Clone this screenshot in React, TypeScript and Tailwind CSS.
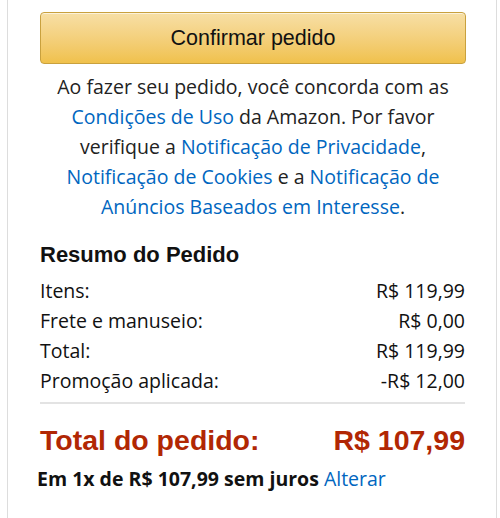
import React from "react";

const body = { fontFamily: '"Open Sans", "Noto Sans", Arial, sans-serif' };
const arial = { fontFamily: '"Liberation Sans", Arial, sans-serif' };

function Row({ label, value }: { label: string; value: string }) {
  return (
    <div className="flex justify-between h-[30px] items-center text-[19.5px] text-[#111]" style={body}>
      <span>{label}</span>
      <span>{value}</span>
    </div>
  );
}

export default function App() {
  return (
    <div className="w-[500px] h-[518px] bg-white">
      <div className="ml-[7px] w-[490px] h-[518px] border-x border-[#ddd] pl-[32px] pr-[30px] pt-[12px]">
        <button
          className="w-full h-[52px] rounded-[4px] border border-[#c9a13e] bg-gradient-to-b from-[#f7dfa5] to-[#f0c14b] text-[21.5px] text-[#111] shadow-[inset_0_1px_0_rgba(255,255,255,0.6)]"
          style={arial}
        >
          Confirmar pedido
        </button>
        <p className="mt-[8px] px-[12px] text-center text-[19.5px] leading-[30px] text-[#222]" style={body}>
          Ao fazer seu pedido, você concorda com as{" "}
          <span className="text-[#0066c0]">Condições de Uso</span> da Amazon. Por favor verifique a{" "}
          <span className="text-[#0066c0]">Notificação de Privacidade</span>,{" "}
          <span className="text-[#0066c0]">Notificação de Cookies</span> e a{" "}
          <span className="text-[#0066c0]">Notificação de Anúncios Baseados em Interesse</span>.
        </p>
        <div className="mt-[17px] pr-[1px]">
          <div className="text-[22px] font-bold text-[#111] h-[30px] flex items-center" style={arial}>
            Resumo do Pedido
          </div>
          <div className="mt-[7px]">
            <Row label="Itens:" value="R$ 119,99" />
            <Row label="Frete e manuseio:" value="R$ 0,00" />
            <Row label="Total:" value="R$ 119,99" />
            <Row label="Promoção aplicada:" value="-R$ 12,00" />
          </div>
          <div className="mt-[6px] border-t-2 border-[#e3e3e3]" />
          <div
            className="mt-[18px] flex justify-between items-center h-[36px] text-[28.5px] font-bold text-[#b12704]"
            style={arial}
          >
            <span>Total do pedido:</span>
            <span>R$ 107,99</span>
          </div>
          <div className="mt-[6px] h-[30px] flex items-center text-[19.5px] font-bold text-[#111] -ml-[3px]" style={body}>
            <span>Em 1x de R$ 107,99 sem juros&nbsp;</span>
            <span className="font-normal text-[#0066c0]">Alterar</span>
          </div>
        </div>
      </div>
    </div>
  );
}
